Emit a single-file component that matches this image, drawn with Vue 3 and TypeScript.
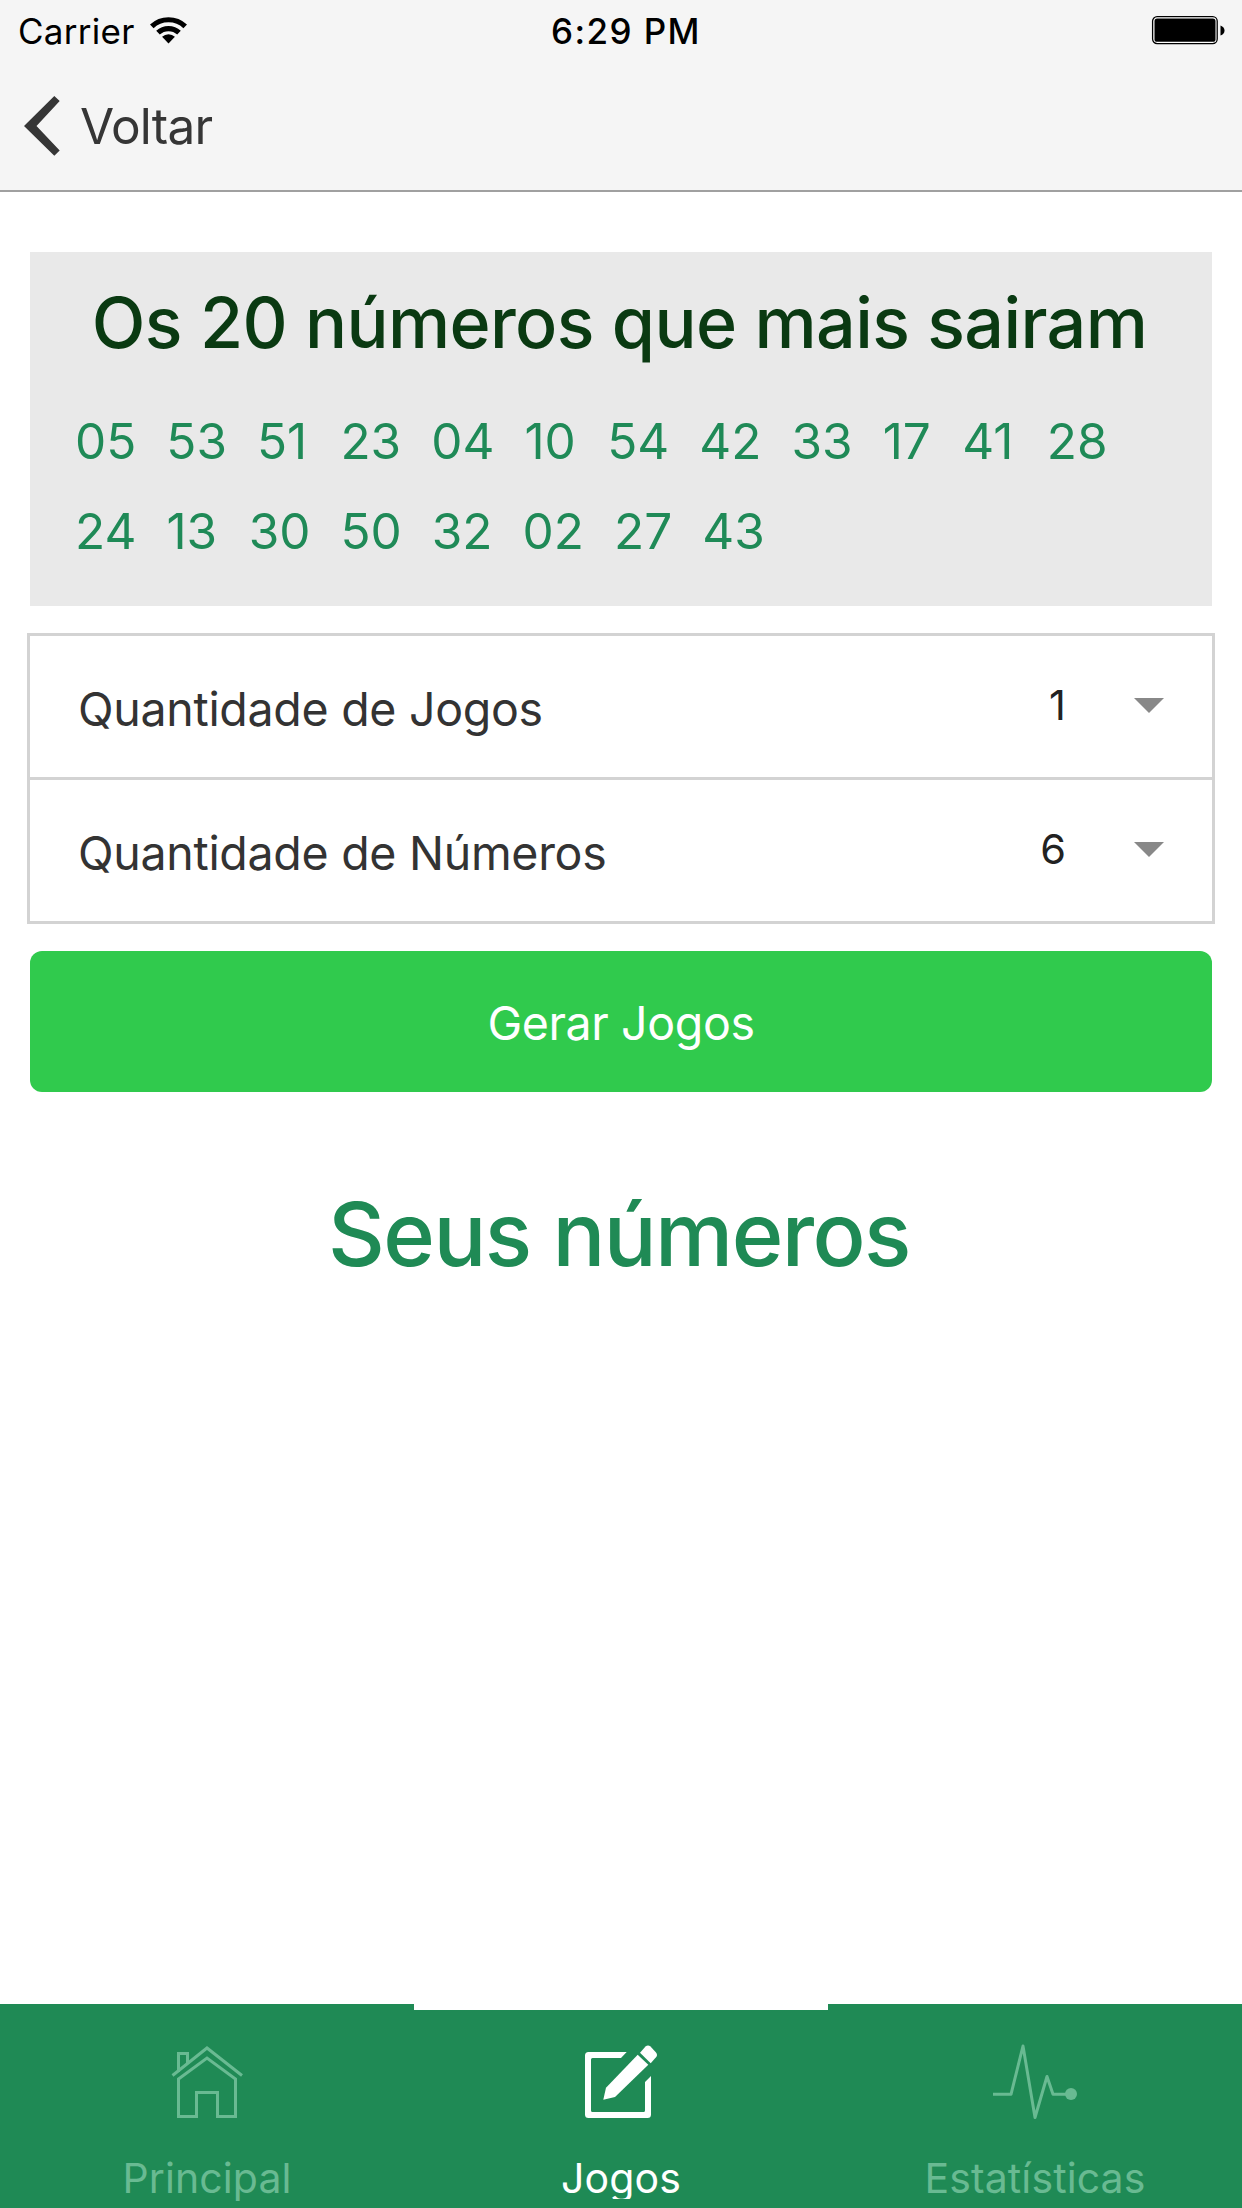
<script setup lang="ts">
const numbers: string[] = [
  '05', '53', '51', '23', '04', '10', '54', '42', '33', '17', '41', '28',
  '24', '13', '30', '50', '32', '02', '27', '43',
]
const fields: { label: string; value: string }[] = [
  { label: 'Quantidade de Jogos', value: '1' },
  { label: 'Quantidade de Números', value: '6' },
]
</script>

<template>
  <div class="screen">
    <header class="header">
      <div class="status">
        <div class="carrier">
          <span>Carrier</span>
          <svg class="wifi" width="38" height="30" viewBox="0 0 38 30">
            <path d="M1.8 11.4A24.3 24.3 0 0 1 35.2 11.4M8 17.7A15.3 15.3 0 0 1 29 17.7" fill="none" stroke="#000" stroke-width="5.2" />
            <path d="M18.5 28.5L12.1 21.8A9.3 9.3 0 0 1 24.9 21.8Z" />
          </svg>
        </div>
        <span class="time">6:29 PM</span>
        <svg class="battery" width="76" height="30" viewBox="0 0 76 30">
          <rect x="1.6" y="1.6" width="64.6" height="27" rx="4.5" fill="#fff" stroke="#000" stroke-width="1.3" />
          <rect x="3.5" y="3.4" width="61" height="23.4" rx="2.6" />
          <path d="M69.5 10.5Q73.500 12 73.500 15.500T69.500 20.500Z" />
        </svg>
      </div>
      <div class="nav">
        <svg class="chevron" width="38" height="62" viewBox="0 0 38 62">
          <path d="M31.3 1L36.7 6.1L13.5 31L36.7 55.6L31.3 60.8L1 31Z" fill="#363636" />
        </svg>
        <span>Voltar</span>
      </div>
    </header>

    <main class="content">
      <section class="card">
        <h2>Os 20 números que mais sairam</h2>
        <div class="numbers">
          <span
            v-for="n in numbers"
            :key="n"
            class="number"
            :class="{ 'starts-one': n[0] === '1', 'ends-one': n[1] === '1' }"
          >{{ n }}</span>
        </div>
      </section>

      <section class="list">
        <div v-for="f in fields" :key="f.label" class="field">
          <span class="label">{{ f.label }}</span>
          <span class="value">{{ f.value }}</span>
          <svg class="arrow" width="30" height="15" viewBox="0 0 30 15"><path d="M0 0H30L15 15Z" fill="#888" /></svg>
        </div>
      </section>

      <button class="generate" type="button">Gerar Jogos</button>
      <h1>Seus números</h1>
    </main>

    <nav class="tabs">
      <a class="tab">
        <svg width="72" height="80" viewBox="0 -2 72 80" fill="none" stroke="currentColor" stroke-width="3">
          <path d="M1.5 30.5L36 3L71 30.5M7.5 27V8.5H16.5V18M7.5 34L36 13L64.5 34V71.5H46.5V47.5H25.5V71.5H7.5Z" />
        </svg>
        <span>Principal</span>
      </a>
      <a class="tab active">
        <svg width="74" height="80" viewBox="0 -1 74 80" fill="currentColor">
          <path d="M42.7 8L37 14H8.5Q7 14 7 15.5V66.5Q7 68 8.5 68H59.5Q61 68 61 66.5V38L67 32V70.5Q67 74 63.5 74H4.5Q1 74 1 70.5V11.5Q1 8 4.5 8Z" />
          <path d="M53.7 10.7L64.3 20.7L31 53L19.3 55.7L22 43.7Z" />
          <path d="M61.5 2.6Q64 .2 66.5 2.6L72 8.5Q74 11 72 13.3L66.7 19.3L56 8.7Z" />
        </svg>
        <span>Jogos</span>
      </a>
      <a class="tab">
        <svg width="86" height="80" viewBox="0 0 86 80" fill="none" stroke="currentColor" stroke-width="3">
          <path d="M1 51.3H19L31 3L43 74.5L55 33.5L61 51.3H79" stroke-linejoin="round" />
          <circle cx="79" cy="51" r="6" fill="currentColor" stroke="none" />
        </svg>
        <span>Estatísticas</span>
      </a>
    </nav>
  </div>
</template>

<style>
body { margin: 0; background: #fff; }
</style>

<style scoped>
.screen {
  display: flex;
  flex-direction: column;
  width: 1242px;
  height: 2208px;
  overflow: hidden;
  background: #fff;
  font-family: Inter, "Liberation Sans", sans-serif;
}
.header { box-sizing: border-box; height: 192px; background: #f5f5f5; border-bottom: 2px solid #a0a0a0; }
.status {
  display: grid;
  grid-template-columns: 1fr auto 1fr;
  height: 60px;
  line-height: 62px;
  font-size: 35px;
}
.carrier { display: flex; padding-left: 18px; letter-spacing: .28px; }
.wifi { margin: 15px 0 0 15px; }
.time { padding-left: 10px; font-weight: 500; letter-spacing: 1.4px; }
.battery { justify-self: end; margin: 15px 15px 0 0; }
.nav { display: flex; padding-left: 23px; color: #363636; font-size: 49.5px; line-height: 132px; letter-spacing: -.75px; }
.chevron { margin: 35px 19px 0 0; }
.content { flex: 1; padding: 60px 27px 0; }
.card { box-sizing: border-box; height: 354px; margin: 0 3px 27px; padding: 30px 45px 0; background: #e9e9e9; }
h2 { margin: 0; padding-right: 3px; text-align: center; color: #0a3a12; font-size: 70px; font-weight: 500; line-height: 81px; letter-spacing: -.63px; white-space: nowrap; }
.numbers { display: flex; flex-wrap: wrap; margin-top: 33px; color: #1f8a57; font-size: 49.5px; line-height: 90px; }
.number { padding-right: 30px; }
.starts-one { padding-right: 31.5px; }
.ends-one { padding-right: 33.2px; }
.list { border: 3px solid #d3d3d3; }
.field { display: flex; height: 141px; padding: 0 48px; color: #333; }
.field + .field { border-top: 3px solid #d3d3d3; }
.label { flex: 1; font-size: 46.5px; line-height: 146px; letter-spacing: -.29px; }
.value { color: #222; font-size: 41.5px; line-height: 138px; }
.arrow { margin: 62px 0 0 68px; }
.generate {
  display: block;
  width: 1182px;
  height: 141px;
  margin: 27px 3px 0;
  padding: 0;
  border: 0;
  border-radius: 12px;
  background: #30ca4d;
  color: #fff;
  font: 400 46.5px/144px Inter, "Liberation Sans", sans-serif;
  letter-spacing: -.38px;
}
h1 { margin: 92px 0 0; padding-right: 4px; text-align: center; color: #1f8a55; font-size: 88px; font-weight: 500; line-height: 100px; letter-spacing: -1.6px; }
.tabs { display: flex; height: 204px; background: #1f8a55; }
.tab {
  display: flex;
  flex: 1;
  flex-direction: column;
  align-items: center;
  box-sizing: border-box;
  height: 195px;
  padding-top: 33px;
  border-top: 6px solid transparent;
  color: #69ba92;
  font-size: 41px;
  font-weight: 400;
  letter-spacing: .1px;
}
.tab svg { flex: none; }
.tab span { margin-top: 34px; line-height: 42px; }
.tab.active { border-top-color: #fff; color: #fff; overflow: hidden; }
</style>
